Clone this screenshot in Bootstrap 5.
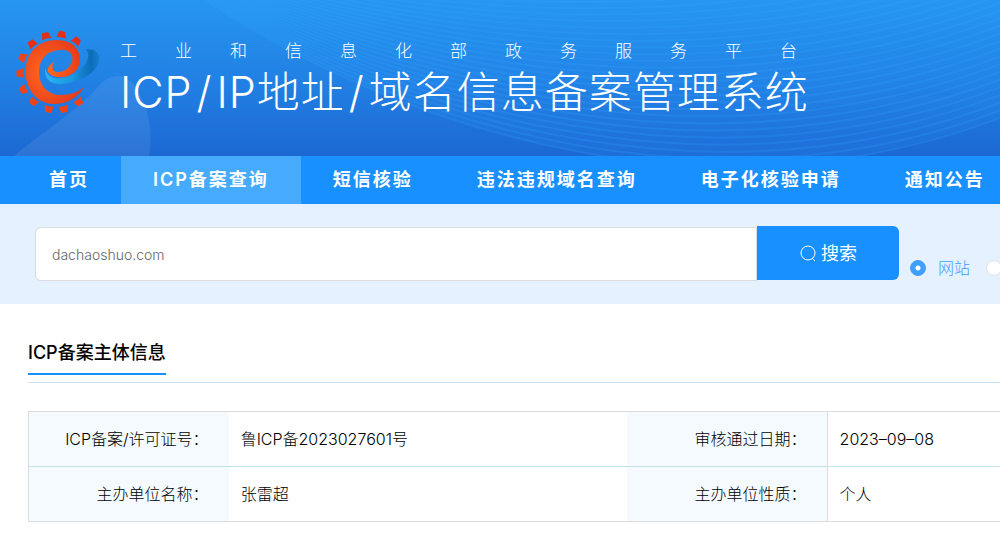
<!DOCTYPE html>
<html lang="zh-CN">
<head>
<meta charset="utf-8">
<meta name="viewport" content="width=device-width, initial-scale=1">
<title>ICP/IP地址/域名信息备案管理系统</title>
<link href="https://cdn.jsdelivr.net/npm/bootstrap@5.3.0/dist/css/bootstrap.min.css" rel="stylesheet">
<style>
  body { font-family: Inter, "Noto Sans CJK SC", sans-serif; font-size: 16px; color: #000; overflow-x: hidden; }
  .site-header { min-height: 156px; overflow: hidden; background: linear-gradient(#2696f1, #217fe3 55%, #1c68d2); }
  .site-waves { inset: 0; width: 100%; height: 100%; }
  .site-logo { width: 85px; height: 85px; margin-left: 15px; }
  .site-sub { font-size: 17px; line-height: 22px; letter-spacing: 38px; font-weight: 300; white-space: nowrap; }
  .site-title { font-size: 43px; line-height: 60px; letter-spacing: 1px; font-weight: 300; white-space: nowrap; }
  .site-title span { margin: 0 4px; }
  .main-nav { background: #1990ff; padding-left: 17px; overflow: hidden; }
  .main-nav .nav-link { color: #fff; font-size: 18px; line-height: 48px; letter-spacing: 2px; font-weight: 600; padding: 0 32px; border-radius: 0; white-space: nowrap; }
  .main-nav .nav-link.active { background: #46abfd; }
  .search-band { background: #e5f1ff; padding: 22px 0 20px 35px; overflow: hidden; }
  .search-box { height: 54px; border: 1px solid #dcdcdc; border-radius: 6px 0 0 6px; padding: 0 16px; font-size: 14px; font-weight: 300; margin-top: 1px; }
  .search-box::placeholder { color: #666; opacity: 1; }
  .search-btn { width: 142px; height: 54px; background: #1990ff; color: #fff; border-radius: 0 6px 6px 0; font-size: 18px; }
  .search-btn:hover { background: #1478d8; color: #fff; }
  .kind-list { width: 101px; height: 58px; padding: 26px 0 0 11px; overflow: hidden; }
  .kind-list .form-check-input { width: 16px; height: 16px; margin: 0; border-color: #dcdfe6; flex: none; }
  .kind-list .form-check-input:checked { background-color: #409eff; border-color: #409eff; background-image: radial-gradient(circle, #fff 2px, transparent 3px); }
  .kind-list label { color: #409eff; font-size: 16px; line-height: 24px; font-weight: 300; white-space: nowrap; }
  .info { padding: 36px 0 22px 28px; }
  .info-head { border-bottom: 1px solid #c5e0f0; padding-bottom: 7px; margin-bottom: 28px; }
  .info-head h2 { font-size: 18px; line-height: 26px; font-weight: 500; padding-bottom: 7px; border-bottom: 2px solid #1990ff; }
  .info-table { table-layout: fixed; border: 1px solid #dcdcdc; border-right: 0; font-weight: 300; }
  .info-table th, .info-table td { height: 55px; padding: 0 12px; vertical-align: middle; color: #000; border: 0; white-space: nowrap; }
  .info-table tr + tr > * { border-top: 1px solid #c5e0f0; }
  .info-table th { background: #f5faff; font-weight: 300; padding-right: 20px; }
  .info-table td:last-child { border-left: 1px solid #dcdcdc; }
</style>
</head>
<body>
<header class="site-header position-relative d-flex align-items-start text-white">
  <svg class="site-waves position-absolute" viewBox="0 0 1000 156" preserveAspectRatio="xMaxYMid slice" aria-hidden="true">
    <path d="M14 156C45 130 78 110 98 87C112 70 129 74 138 91C150 112 153 134 149 156Z" fill="#fff" opacity=".08"/>
    <path d="M205 0C400 130 720 235 1020 110V0Z" fill="#2da0ff" opacity=".12"/>
    <g id="waves" fill="none" stroke="#35a8ff" stroke-width="2" opacity=".2"></g>
  </svg>
  <svg class="site-logo position-relative flex-shrink-0 mt-4" viewBox="45 72 255 255" style="overflow:visible" aria-hidden="true">
    <defs>
      <radialGradient id="flame" cx=".35" cy=".5" r=".65"><stop offset="0" stop-color="#ff6a20"/><stop offset="1" stop-color="#e63a1a"/></radialGradient>
      <linearGradient id="swoosh"><stop offset="0" stop-color="#2bb4f5"/><stop offset=".5" stop-color="#1a97e0"/><stop offset=".85" stop-color="#0d6cb9"/><stop offset="1" stop-color="#1580d0"/></linearGradient>
      <path id="tooth" d="M-9-12L9-11L14 9Q0 5-14 9Z"/>
    </defs>
    <g fill="#e62e17">
      <use href="#tooth" transform="translate(229 124) rotate(35)"/><use href="#tooth" transform="translate(185 105) rotate(10)"/>
      <use href="#tooth" transform="translate(138 109) rotate(-14)"/><use href="#tooth" transform="translate(97 132) rotate(-39)"/>
    </g>
    <g fill="#ee4319">
      <use href="#tooth" transform="translate(69 173) rotate(-66)"/><use href="#tooth" transform="translate(61 220) rotate(-93)"/>
      <use href="#tooth" transform="translate(71 268) rotate(-119)"/><use href="#tooth" transform="translate(101 304) rotate(-144)"/>
      <use href="#tooth" transform="translate(146 326) rotate(-170)"/><use href="#tooth" transform="translate(191 326) rotate(167)"/>
      <use href="#tooth" transform="translate(236 305) rotate(142)"/>
    </g>
    <path fill="url(#swoosh)" d="M135 204C133 238 150 252 182 252C240 250 298 215 298 175C298 155 280 145 256 148C272 160 265 185 245 205C225 225 190 238 165 235C150 232 140 222 135 204Z"/>
    <path fill="url(#flame)" d="M252 262C235 290 205 312 165 312C112 312 77 270 77 215C77 157 115 120 170 120C215 120 240 145 240 178C240 210 215 232 180 232C155 232 142 220 143 208C144 198 152 192 162 185C156 196 156 205 162 212C170 220 190 217 203 205C218 190 222 172 212 160C203 150 190 148 178 150C140 152 117 180 117 215C117 258 145 285 185 285C215 285 235 275 252 262Z"/>
  </svg>
  <div class="position-relative ps-3 ms-1 mt-4 pt-3">
    <div class="site-sub">工业和信息化部政务服务平台</div>
    <h1 class="site-title mb-0">ICP<span>/</span>IP地址<span>/</span>域名信息备案管理系统</h1>
  </div>
</header>

<nav class="main-nav">
  <ul class="nav flex-nowrap">
    <li class="nav-item"><a class="nav-link" href="#">首页</a></li>
    <li class="nav-item"><a class="nav-link active" aria-current="page" href="#">ICP备案查询</a></li>
    <li class="nav-item"><a class="nav-link" href="#">短信核验</a></li>
    <li class="nav-item"><a class="nav-link" href="#">违法违规域名查询</a></li>
    <li class="nav-item"><a class="nav-link" href="#">电子化核验申请</a></li>
    <li class="nav-item"><a class="nav-link" href="#">通知公告</a></li>
  </ul>
</nav>

<form class="search-band d-flex align-items-start">
  <input class="search-box form-control flex-grow-1" type="text" placeholder="dachaoshuo.com" aria-label="搜索">
  <button class="search-btn btn flex-shrink-0 border-0 d-flex align-items-center justify-content-center gap-1" type="button">
    <svg width="18" height="18" viewBox="0 0 18 18" fill="none" stroke="currentColor" aria-hidden="true"><circle cx="9" cy="9" r="7"/><path d="M13 14L16 17"/></svg>
    <span>搜索</span>
  </button>
  <div class="kind-list d-flex flex-shrink-0">
    <div class="d-flex align-items-center flex-shrink-0">
      <input class="form-check-input" type="radio" name="kind" id="kind-site" checked>
      <label class="ps-2 ms-1 me-3" for="kind-site">网站</label>
    </div>
    <div class="d-flex align-items-center flex-shrink-0">
      <input class="form-check-input" type="radio" name="kind" id="kind-app" aria-label="APP">
    </div>
  </div>
</form>

<main class="info">
  <div class="info-head"><h2 class="d-inline-block align-top mb-0">ICP备案主体信息</h2></div>
  <table class="info-table table mb-0">
    <colgroup><col style="width:20.6%"><col style="width:41%"><col style="width:20.6%"><col></colgroup>
    <tbody>
      <tr><th class="text-end" scope="row">ICP备案/许可证号：</th><td>鲁ICP备2023027601号</td><th class="text-end" scope="row">审核通过日期：</th><td>2023–09–08</td></tr>
      <tr><th class="text-end" scope="row">主办单位名称：</th><td>张雷超</td><th class="text-end" scope="row">主办单位性质：</th><td>个人</td></tr>
    </tbody>
  </table>
</main>

<script src="https://cdn.jsdelivr.net/npm/bootstrap@5.3.0/dist/js/bootstrap.bundle.min.js"></script>
<script>
  // Nested arcs that sweep across the right part of the header
  const waves = document.getElementById('waves');
  for (let i = 0; i <= 34; i++) {
    const t = i / 34;
    const p = document.createElementNS('http://www.w3.org/2000/svg', 'path');
    p.setAttribute('d', `M205 ${-60 + 60 * t}C400 ${-50 + 180 * t} 720 ${-40 + 275 * t} 1020 ${-150 + 260 * t}`);
    waves.append(p);
  }
</script>
</body>
</html>
